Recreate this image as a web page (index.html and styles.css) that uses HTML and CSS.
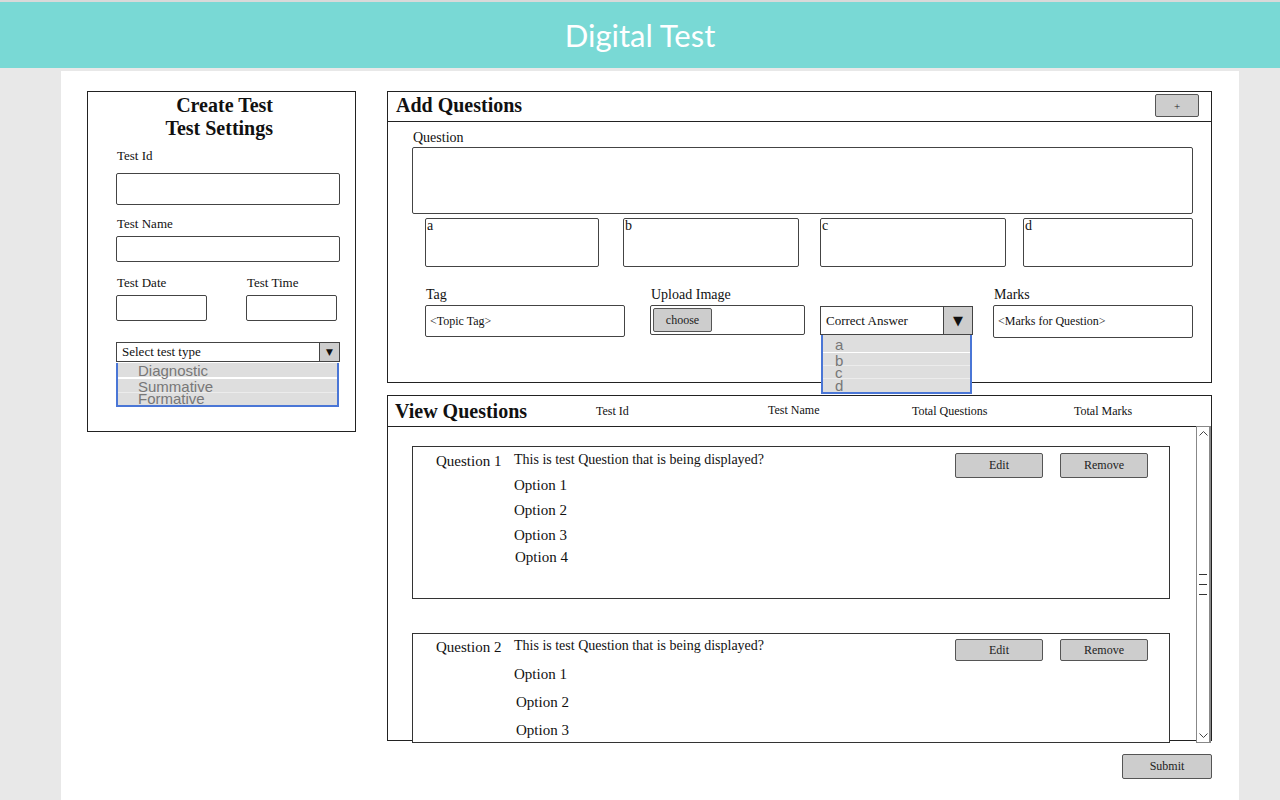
FILE: index.html
```html
<!DOCTYPE html>
<html lang="en">
<head>
<meta charset="utf-8">
<title>Digital Test</title>
<link rel="stylesheet" href="styles.css">
</head>
<body>
<header class="topbar"><h1 class="brand">Digital Test</h1></header>
<main class="sheet">
  <section class="settings">
    <h2 class="settings-title">Create Test<br>Test Settings</h2>
    <label class="lbl lbl-id">Test Id</label>
    <div class="field field-id"></div>
    <label class="lbl lbl-name">Test Name</label>
    <div class="field field-name"></div>
    <div class="dt-row">
      <div class="dt-col"><label class="lbl">Test Date</label><div class="field field-dt"></div></div>
      <div class="dt-col"><label class="lbl">Test Time</label><div class="field field-dt"></div></div>
    </div>
    <div class="select select-type"><span class="select-text">Select test type</span><span class="select-btn">&#9660;</span></div>
    <ul class="optlist optlist-type"><li>Diagnostic</li><li>Summative</li><li>Formative</li></ul>
  </section>

  <div class="right-col">
    <section class="panel add-panel">
      <div class="panel-head add-head">
        <h2 class="panel-title">Add Questions</h2>
        <button class="btn btn-plus">+</button>
      </div>
      <div class="add-body">
        <label class="lbl lbl-q">Question</label>
        <div class="field field-question"></div>
        <div class="opt-row">
          <div class="field opt-box opt-a">a</div>
          <div class="field opt-box opt-b">b</div>
          <div class="field opt-box opt-c">c</div>
          <div class="field opt-box opt-d">d</div>
        </div>
        <div class="meta-row">
          <div class="meta-col meta-tag">
            <label class="lbl lbl-meta">Tag</label>
            <div class="field field-tag">&lt;Topic Tag&gt;</div>
          </div>
          <div class="meta-col meta-upload">
            <label class="lbl lbl-meta">Upload Image</label>
            <div class="field field-upload"><button class="btn btn-choose">choose</button></div>
          </div>
          <div class="meta-col meta-answer">
            <span class="lbl lbl-meta">&nbsp;</span>
            <div class="select select-answer">
              <span class="select-text">Correct Answer</span><span class="select-btn select-btn-big">&#9660;</span>
              <ul class="optlist optlist-answer"><li>a</li><li>b</li><li>c</li><li>d</li></ul>
            </div>
          </div>
          <div class="meta-col meta-marks">
            <label class="lbl lbl-meta">Marks</label>
            <div class="field field-marks">&lt;Marks for Question&gt;</div>
          </div>
        </div>
      </div>
    </section>

    <section class="panel view-panel">
      <div class="view-head">
        <h2 class="panel-title">View Questions</h2>
        <span class="col-lbl">Test Id</span>
        <span class="col-lbl col-up">Test Name</span>
        <span class="col-lbl">Total Questions</span>
        <span class="col-lbl">Total Marks</span>
      </div>
      <div class="view-body">
        <div class="cards">
          <article class="qcard qcard-1">
            <div class="q-num">Question 1</div>
            <div class="q-content">
              <p class="q-text">This is test Question that is being displayed?</p>
              <p class="q-opt q-opt-first">Option 1</p>
              <p class="q-opt">Option 2</p>
              <p class="q-opt">Option 3</p>
              <p class="q-opt q-opt-last">Option 4</p>
            </div>
            <div class="q-actions"><button class="btn btn-act">Edit</button><button class="btn btn-act">Remove</button></div>
          </article>
          <article class="qcard qcard-2">
            <div class="q-num">Question 2</div>
            <div class="q-content">
              <p class="q-text">This is test Question that is being displayed?</p>
              <p class="q-opt q-opt-first">Option 1</p>
              <p class="q-opt q-opt-shift">Option 2</p>
              <p class="q-opt q-opt-shift">Option 3</p>
            </div>
            <div class="q-actions"><button class="btn btn-act btn-act-sm">Edit</button><button class="btn btn-act btn-act-sm">Remove</button></div>
          </article>
        </div>
        <div class="scrollbar">
          <svg class="chev" width="13" height="10" viewBox="0 0 13 10"><polyline points="2.5,7.5 6.5,3.5 10.5,7.5" fill="none" stroke="#444" stroke-width="1"/></svg>
          <svg class="grip" width="13" height="24" viewBox="0 0 13 24"><path d="M2 1.5H10M2 11.5H10M2 21.5H10" stroke="#333" stroke-width="1"/></svg>
          <svg class="chev" width="13" height="10" viewBox="0 0 13 10"><polyline points="2.5,2.5 6.5,6.5 10.5,2.5" fill="none" stroke="#444" stroke-width="1"/></svg>
        </div>
      </div>
    </section>

    <button class="btn btn-submit">Submit</button>
  </div>
</main>
</body>
</html>
```
FILE: styles.css
```css
* { box-sizing: border-box; margin: 0; padding: 0; }

body {
  background: #e8e8e8;
  font-family: "Liberation Serif", "Times New Roman", serif;
  color: #111;
}

.topbar {
  height: 68px;
  border-top: 2px solid #d9d9d9;
  background: #79d9d5;
  display: flex;
  align-items: center;
  justify-content: center;
}

.brand {
  font-family: Lato, "Open Sans", sans-serif;
  font-weight: 400;
  font-size: 31px;
  line-height: 40px;
  color: #fff;
}

.sheet {
  margin: 3px 0 0 61px;
  width: 1178px;
  min-height: 729px;
  background: #fff;
  padding: 20px 27px 0 26px;
  display: flex;
  align-items: flex-start;
  gap: 31px;
}

/* ---------- settings ---------- */
.settings {
  width: 269px;
  height: 341px;
  border: 1px solid #222;
  padding: 2px 15px 0 28px;
  display: flex;
  flex-direction: column;
}

.settings-title {
  font-size: 20px;
  font-weight: bold;
  line-height: 23px;
  text-align: right;
  margin-right: 67px;
}

.lbl {
  display: block;
  font-size: 13px;
  line-height: 16px;
  margin-left: 1px;
}

.lbl-id { margin-top: 8px; }
.lbl-name { margin-top: 11px; }

.field {
  border: 1px solid #444;
  border-radius: 2px;
  background: #fff;
}

.field-id { margin-top: 9px; height: 32px; }
.field-name { margin-top: 4px; height: 26px; }

.dt-row {
  display: flex;
  gap: 39px;
  margin-top: 13px;
}

.dt-col { width: 91px; }
.field-dt { margin-top: 4px; height: 26px; }

.select {
  display: flex;
  align-items: stretch;
  border: 1px solid #444;
  background: #fff;
}

.select-text {
  flex: 1;
  font-size: 13px;
  padding-left: 5px;
  display: flex;
  align-items: center;
}

.select-btn {
  background: #cdcdcd;
  border-left: 1px solid #444;
  font-family: "DejaVu Sans", sans-serif;
  color: #111;
  display: flex;
  align-items: center;
  justify-content: center;
}

.select-type { margin-top: 21px; height: 20px; }
.select-type .select-btn { width: 20px; font-size: 9px; }

.optlist {
  list-style: none;
  border: 2px solid #4a76d6;
  border-top: 0;
  background: #fff;
  font-family: "Liberation Sans", Arial, sans-serif;
  font-size: 15px;
  color: #777;
}

.optlist li {
  background: #dedede;
  height: 13px;
  line-height: 13px;
}

.optlist-type { margin-top: 1px; width: 223px; }
.optlist-type li { padding-left: 20px; }
.optlist-type li:first-child { height: 14px; line-height: 15px; }
.optlist-type li:nth-child(2) { height: 15px; border-top: 2px solid #fff; line-height: 15px; }
.optlist-type li:nth-child(3) { border-top: 1px solid #ececec; line-height: 12px; }

/* ---------- right column ---------- */
.right-col {
  width: 825px;
  display: flex;
  flex-direction: column;
}

.panel {
  border: 1px solid #222;
  background: #fff;
}

.add-panel { height: 292px; }

.panel-head {
  display: flex;
  align-items: flex-start;
  justify-content: space-between;
}

.add-head {
  height: 30px;
  border-bottom: 1px solid #222;
  padding: 0 12px 0 8px;
}

.panel-title {
  font-size: 20px;
  font-weight: bold;
  line-height: 26px;
}

.btn {
  background: #cdcdcd;
  border: 1px solid #555;
  border-radius: 2px;
  font-family: "Liberation Serif", "Times New Roman", serif;
  font-size: 12px;
  color: #222;
}

.btn-plus { width: 44px; height: 23px; margin-top: 2px; font-size: 11px; }

.add-body { padding: 8px 18px 0 24px; }

.lbl-q { font-size: 14px; }

.field-question { margin-top: 1px; height: 67px; }

.opt-row {
  margin: 4px 0 0 13px;
  height: 49px;
  display: flex;
}

.opt-box {
  font-size: 14px;
  line-height: 14px;
  padding-left: 1px;
}

.opt-a { width: 174px; }
.opt-b { width: 176px; margin-left: 24px; }
.opt-c { width: 186px; margin-left: 21px; }
.opt-d { width: 170px; margin-left: 17px; }

.meta-row {
  margin: 20px 0 0 13px;
  display: flex;
  align-items: flex-start;
}

.meta-col {
  display: flex;
  flex-direction: column;
  gap: 2px;
}

.meta-tag { width: 200px; }
.meta-upload { width: 155px; margin-left: 25px; }
.meta-answer { width: 153px; margin-left: 15px; }
.meta-marks { width: 200px; margin-left: 20px; }

.lbl-meta { font-size: 14px; }

.field-tag, .field-marks {
  height: 32px;
  font-size: 12px;
  padding-left: 4px;
  display: flex;
  align-items: center;
}

.field-marks { height: 33px; }

.field-upload { height: 30px; padding: 2px; }
.btn-choose { width: 59px; height: 24px; }

.select-answer {
  position: relative;
  height: 29px;
  margin-top: 1px;
}

.select-answer .select-text { padding-left: 5px; }
.select-btn-big { width: 29px; font-size: 13px; }

.optlist-answer {
  position: absolute;
  top: 28px;
  left: 0;
  width: 151px;
  z-index: 2;
}

.optlist-answer li { padding-left: 12px; }
.optlist-answer li:first-child { height: 17px; line-height: 20px; }
.optlist-answer li:nth-child(2) { border-top: 1px solid #fff; line-height: 16px; }
.optlist-answer li:nth-child(3) { border-top: 1px solid #ececec; line-height: 13px; }
.optlist-answer li:nth-child(4) { height: 14px; border-top: 1px solid #ececec; line-height: 13px; }

/* ---------- view ---------- */
.view-panel {
  height: 346px;
  margin-top: 12px;
  display: flex;
  flex-direction: column;
}

.view-head {
  height: 31px;
  flex: none;
  border-bottom: 1px solid #222;
  display: grid;
  grid-template-columns: 201px 172px 144px 162px 1fr;
  align-items: center;
  padding-left: 7px;
}

.col-lbl { font-size: 12px; line-height: 14px; }
.col-up { margin-top: -2px; }

.view-body {
  flex: 1;
  display: flex;
}

.cards {
  flex: 1;
  padding: 19px 0 0 24px;
}

.qcard {
  width: 758px;
  border: 1px solid #333;
  background: #fff;
  display: grid;
  grid-template-columns: 78px 1fr auto;
  align-items: start;
  padding: 5px 21px 0 23px;
  position: relative;
}

.qcard-1 { height: 153px; }
.qcard-2 { height: 110px; margin-top: 34px; padding-top: 4px; }

.q-num { font-size: 15px; line-height: 18px; }

.q-text { font-size: 14px; line-height: 18px; margin-top: -1px; }

.q-opt { font-size: 15px; line-height: 25px; }
.q-opt-first { margin-top: 4px; }
.q-opt-last { margin-top: -3px; margin-left: 1px; }

.qcard-2 .q-opt { line-height: 28px; }
.qcard-2 .q-opt-first { margin-top: 5px; }
.q-opt-shift { margin-left: 2px; }

.q-actions {
  display: flex;
  gap: 17px;
  margin-top: 1px;
}

.btn-act { width: 88px; height: 25px; }
.btn-act-sm { height: 22px; }

.scrollbar {
  width: 15px;
  margin-top: -1px;
  border: 1px solid #888;
  border-right: 2px solid #888;
  background: #fff;
  display: flex;
  flex-direction: column;
  justify-content: space-between;
  align-items: center;
  padding: 1px 0;
}

.btn-submit {
  align-self: flex-end;
  margin-top: 13px;
  width: 90px;
  height: 25px;
}
```
